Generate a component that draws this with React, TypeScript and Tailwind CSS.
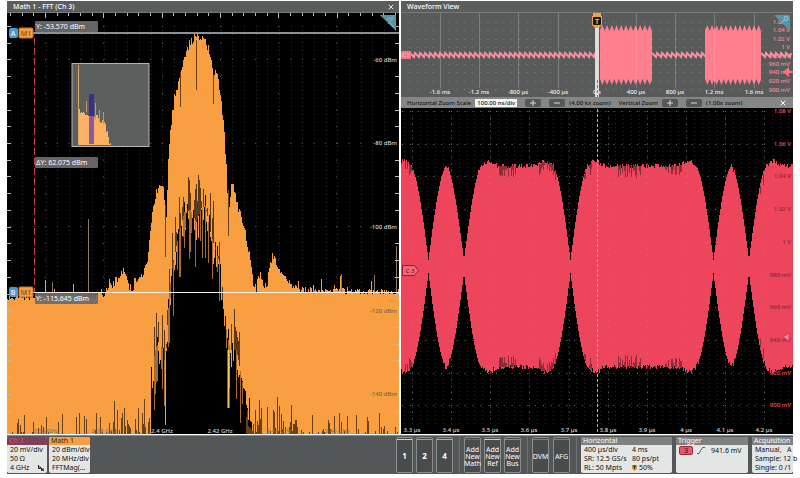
import type { ReactNode } from "react";
import clsx from "clsx";
import { X } from "lucide-react";

type Pt = [number, number];

// 고정 시드 노이즈 (0..1)
function noise(n: number) {
  const s = Math.sin(n * 127.1 + 11.7) * 43758.5453;
  return s - Math.floor(s);
}

function lerp(points: Pt[], x: number) {
  for (let i = 1; i < points.length; i++) {
    const [x0, y0] = points[i - 1];
    const [x1, y1] = points[i];
    if (x <= x1) return y0 + ((y1 - y0) * (x - x0)) / (x1 - x0);
  }
  return points[points.length - 1][1];
}

const range = (n: number) => Array.from({ length: n }, (_, i) => i);

/* ── FFT ─────────────────────────────────────────────── */

const FFT_TOP: Pt[] = [
  [7, 297], [95, 296], [104, 294], [110, 286], [116, 280], [120, 274], [124, 272],
  [127, 282], [132, 292], [134, 280], [137, 283], [141, 278], [145, 268], [148, 254],
  [150, 228], [153, 208], [156, 192], [160, 185], [163, 188], [165, 215], [166, 215],
  [168, 158], [171, 122], [174, 98], [178, 82], [181, 70], [184, 58], [189, 44],
  [194, 37], [198, 35], [202, 38], [206, 45], [210, 53], [213, 78], [215, 68],
  [220, 92], [223, 122], [226, 165], [228, 228], [229, 204], [231, 182], [234, 190],
  [239, 212], [243, 224], [246, 240], [250, 260], [253, 282], [256, 290], [258, 276],
  [261, 277], [263, 287], [267, 286], [269, 266], [272, 256], [275, 262], [278, 266],
  [282, 275], [290, 284], [300, 290], [399, 292],
];

const FFT_FLOOR: Pt[] = [
  [150, 430], [151, 372], [155, 350], [158, 342], [163, 350], [165, 370], [167, 325],
  [169, 290], [173, 262], [178, 236], [184, 212], [190, 210], [196, 222], [201, 208],
  [205, 206], [210, 232], [215, 250], [219, 262], [222, 300], [225, 325], [230, 350],
  [236, 350], [241, 376], [245, 398], [249, 408], [254, 434],
];

function fftTop(x: number) {
  const base = lerp(FFT_TOP, x);
  const flat = x < 110 || x > 280;
  const jitter = (noise(x) - 0.5) * (flat ? 6 : 9);
  const spike = flat && noise(x + 500) > 0.93 ? -noise(x + 900) * 16 : 0;
  return Math.round(base + jitter + spike);
}

function fftPath() {
  let d = "M7 434";
  for (let x = 7; x < 399; x++) d += `V${fftTop(x)}H${x + 1}`;
  return d + "V434Z";
}

function floorPath() {
  let d = "M150 434";
  for (let x = 150; x < 254; x++) {
    d += `V${Math.min(434, Math.round(lerp(FFT_FLOOR, x) + (noise(x + 40) - 0.35) * 34))}H${x + 1}`;
  }
  return d + "V434Z";
}

// 바닥 근처의 가는 스파이크
function bottomSpikes() {
  let d = "";
  for (let x = 9; x < 398; x++) {
    const near = (x > 110 && x < 150) || (x > 245 && x < 300);
    if (noise(x + 71) < (near ? 0.35 : 0.72) || (x > 150 && x < 245)) continue;
    const h = 2 + noise(x + 33) ** 2 * (near ? 36 : 19);
    d += `M${x}.5 434v-${Math.round(h)}`;
  }
  return d;
}

function humpStreaks(down: boolean) {
  let d = "";
  for (let x = 153; x < 244; x++) {
    if (noise(x + (down ? 210 : 310)) < 0.58) continue;
    const y = Math.round(lerp(FFT_FLOOR, x));
    const h = Math.round(noise(x + (down ? 400 : 600)) * 42);
    d += `M${x}.5 ${y}v${down ? h + 14 : -h}`;
  }
  return d;
}

function insetPath() {
  let d = "M78 145";
  for (let x = 78; x < 111; x++) {
    const base = lerp([[78, 107], [84, 109], [97, 114], [104, 118], [111, 145]], x);
    d += `V${Math.min(145, Math.round(base + noise(x + 3) * 7))}H${x + 1}`;
  }
  return d + "V145Z";
}

function CornerIcon({ x, y, wave }: { x: number; y: number; wave?: boolean }) {
  return (
    <g transform={`translate(${x} ${y})`}>
      <path d="M0 0H16V16Z" fill="#5b93a5" />
      {wave ? (
        <g fill="none" stroke="#8fd0e2">
          <circle cx="12" cy="3.500" r="2" />
          <path d="M10.500 5L6 9" />
        </g>
      ) : (
        <path d="M6 5l7-3M13 3l-5 6M10 8l4 4" stroke="#86b7c6" fill="none" />
      )}
    </g>
  );
}

function FftPlot() {
  return (
    <svg viewBox="7 13 392 421" className="block h-auto w-full bg-black font-['Noto_Sans',sans-serif] text-[6px] font-medium">
      <g stroke="#2b2d2d" strokeDasharray="1 3">
        {range(33).map((i) => (
          <path key={i} d={`M${Math.round(10.5 + i * 11.67)}.5 26V434`} />
        ))}
      </g>
      <g stroke="#555858" strokeDasharray="1 10.67">
        {[59, 143, 226, 310, 394].map((y) => (
          <path key={y} d={`M10 ${y}.5H366`} />
        ))}
      </g>
      <g stroke="#606464" strokeDasharray="1 15.7">
        {[45, 103, 162, 220, 278, 336].map((x) => (
          <path key={x} d={`M${x}.5 26V434`} />
        ))}
      </g>

      <path d={fftPath()} fill="#f89f42" />
      <path d="M88.500 292V219M52.500 296V282M396.500 292V246M374.500 292V275M341.500 292V274" stroke="#96795a" />
      <path d={floorPath()} fill="#000" />
      <path d={humpStreaks(false)} stroke="#5d3a17" />
      <path d={humpStreaks(true)} stroke="#a86c30" />
      <path d={bottomSpikes()} stroke="#6b4119" />
      <path d="M165.500 360V425" stroke="#d8b04c" />
      <path d="M228.500 350V408" stroke="#f2cf4e" strokeWidth="2" />
      <path d="M165.500 205V257M180.500 72V107M196.500 40V90M213.500 75V104M228.500 190V236" stroke="#6b4119" />

      <g stroke="#b9bcbc">
        {range(34).map((i) => {
          const x = Math.round(10 + i * 11.67);
          return <path key={i} d={`M${x}.5 13v${(i + 2) % 5 === 0 ? 5 : 3}`} />;
        })}
        {range(24).map((i) => {
          const y = Math.round(26 + i * 16.72);
          const labelled = i % 5 === 2;
          return <path key={i} d={labelled ? `M7 ${y}.5h4` : `M7 ${y}.5h4M395 ${y}.5h4`} />;
        })}
      </g>

      {/* 축 라벨 */}
      <g textAnchor="end" fill="#d5d8d8">
        <text x="397" y="62">-60 dBm</text>
        <text x="397" y="145">-80 dBm</text>
        <text x="397" y="229">-100 dBm</text>
        <g fill="#80643f">
          <text x="397" y="313">-120 dBm</text>
          <text x="397" y="396">-140 dBm</text>
        </g>
      </g>
      <g textAnchor="middle" fill="#d5d8d8">
        <text x="162" y="433">2.4 GHz</text>
        <text x="220" y="433">2.42 GHz</text>
        <g fill="#8f7250">
          <text x="46" y="433">2.36 GHz</text>
          <text x="104" y="433">2.38 GHz</text>
          <text x="279" y="433">2.44 GHz</text>
          <text x="337" y="433">2.46 GHz</text>
        </g>
      </g>

      {/* 커서 */}
      <path d="M33 33H399" stroke="#8d9292" strokeWidth="2" />
      <path d="M33 292.500H399" stroke="#f4eee6" />
      <path d="M34.500 38V292" stroke="#c04a4a" strokeDasharray="7 3" />
      {[
        { y: 21, label: "Y: -53.570 dBm" },
        { y: 157, label: "ΔY: 62.075 dBm" },
        { y: 293, label: "Y: -115.645 dBm" },
      ].map((c) => (
        <g key={c.y} fontSize="7" fontWeight="400">
          <rect x="35" y={c.y} width="63" height="11" rx="1" fill="#6a6c6c" fillOpacity="0.93" />
          <text x="36" y={c.y + 8} fill="#fff">{c.label}</text>
        </g>
      ))}
      {[{ y: 28, label: "A" }, { y: 287, label: "B" }].map((c) => (
        <g key={c.label} textAnchor="middle" fontSize="7">
          <rect x="9" y={c.y} width="9" height="10" rx="2" fill="#4b9ad6" />
          <text x="13" y={c.y + 8} fill="#e8f6ff">{c.label}</text>
          <rect x="19" y={c.y} width="14" height="10" rx="1" fill="#f89f42" stroke="#b87430" />
          <text x="26" y={c.y + 8} fill="#7c4c16">M1</text>
        </g>
      ))}

      {/* 미니맵 */}
      <rect x="72" y="63.500" width="77" height="83" fill="#5d5f5f" stroke="#b5b7b7" />
      <path d={insetPath()} fill="#fbb264" />
      <path d="M78.500 65V145" stroke="#dfa566" />
      <path d="M86.500 101V112M95.500 103V120M99.500 110V122M103.500 112V124" stroke="#c59867" />
      <rect x="89" y="94" width="5" height="22" fill="#3a2f91" />
      <rect x="89" y="116" width="5" height="28" fill="#8c58a0" />

      <CornerIcon x={380} y={15} />
    </svg>
  );
}

/* ── Waveform ────────────────────────────────────────── */

function sawPath(from: number, to: number) {
  let d = `M${from} 53`;
  for (let x = from; x + 5 <= to; x += 5) d += `L${x + 4} 57L${x + 5} 53`;
  return d;
}

function burstPath(from: number, to: number) {
  let d = `M${from} 30`;
  const n = Math.round((to - from) / 4.7);
  const w = (to - from) / n;
  for (let i = 0; i < n; i++) d += `L${from + (i + 0.5) * w} 25L${from + (i + 1) * w} 31`;
  d += `V80`;
  for (let i = n; i > 0; i--) d += `L${from + (i - 0.5) * w} 85L${from + (i - 1) * w} 79`;
  return d + "Z";
}

function Overview() {
  const times = ["-1.6 ms", "-1.2 ms", "-800 µs", "-400 µs", "0 s", "400 µs", "800 µs", "1.2 ms", "1.6 ms"];
  const volts: [string, number][] = [
    ["1.06 V", 24], ["1.04 V", 32], ["1.02 V", 41], ["1 V", 49], ["980 mV", 58],
    ["960 mV", 66], ["940 mV", 74], ["920 mV", 83], ["900 mV", 92],
  ];
  return (
    <svg viewBox="401 13 392 84" className="block h-auto w-full bg-[#595b5b] font-['Noto_Sans',sans-serif] text-[6px] font-medium">
      <g stroke="#828585" strokeDasharray="1 6.85">
        {[22, 30, 39, 47, 64, 72, 81, 89].map((y) => (
          <path key={y} d={`M409 ${y}.5H765`} />
        ))}
      </g>
      <g stroke="#7b7e7e">
        {range(9).map((i) => (
          <path key={i} d={`M${Math.round(440 + i * 39.2)}.5 13V88`} />
        ))}
      </g>
      <g fill="none" stroke="#f78f9c" strokeWidth="2">
        <path d={sawPath(410, 597)} />
        <path d={sawPath(652, 707)} />
        <path d={sawPath(761, 793)} />
      </g>
      <g fill="#ff8795">
        {volts.map(([t, y]) => (
          <text key={t} x="790" y={y} textAnchor="end">{t}</text>
        ))}
      </g>
      <path d={burstPath(600, 652)} fill="#ff7f8f" />
      <path d={burstPath(705, 761)} fill="#ff7f8f" />
      <path d="M636.500 28V82M714.500 28V82M754.500 28V82" stroke="#ff8d9b" />
      <g fill="#eceeee" textAnchor="middle">
        {times.map((t, i) => (
          <text key={t} x={Math.round(440 + i * 39.2)} y="94">{t}</text>
        ))}
      </g>

      <rect x="401" y="51" width="10" height="8" fill="#f47786" />
      <text x="406" y="57" textAnchor="middle" fill="#ffb4bc">C3</text>

      <path d="M597 28V97" stroke="#dcdede" strokeWidth="4" />
      <path d="M597.500 80V97" stroke="#77797a" strokeDasharray="3 2" />
      <path d="M593 13h8v3h-8z" fill="#f89f42" />
      <path d="M592 16h10v9l-3 3h-4l-3-3z" fill="#f89f42" />
      <rect x="593" y="17" width="8" height="8" rx="1" fill="#1d1408" />
      <text x="597" y="24" textAnchor="middle" fill="#ffb454" fontSize="7" fontWeight="700">T</text>

      <CornerIcon x={774} y={15} wave />
      <path d="M783 72l6-5v4h4v2h-4v4z" fill="#ff6f81" />
    </svg>
  );
}

const NODES = [428.5, 464, 570.5, 713.5, 749];

function amplitude(x: number) {
  const d = Math.min(...NODES.map((n) => Math.abs(x - n)));
  const rise = d < 19 ? Math.sin((Math.PI / 2) * (d / 19)) : 1;
  const overshoot = 5 * Math.exp(-(((d - 25) / 6) ** 2));
  return { d, h: 94 * rise + overshoot };
}

function envelopePath() {
  let d = "M401 267";
  for (let x = 401; x < 793; x++) {
    const a = amplitude(x + 0.5);
    const j = a.d > 14 ? (noise(x) - 0.5) * 5 : 0;
    d += `V${Math.round(260 - a.h + j)}H${x + 1}`;
  }
  for (let x = 792; x >= 401; x--) {
    const a = amplitude(x + 0.5);
    const j = a.d > 14 ? (noise(x + 77) - 0.5) * 5 : 0;
    d += `V${Math.round(273 + a.h + j)}H${x}`;
  }
  return d + "Z";
}

// 포락선 가장자리의 어두운 결
function fringe() {
  let d = "";
  const bands = [[405, 412], [497, 516], [538, 556], [584, 592], [618, 642], [664, 682], [760, 764]];
  bands.forEach(([a, b]) => {
    for (let x = a; x < b; x++) {
      if (noise(x + 5) < 0.4) continue;
      const { h } = amplitude(x);
      const len = Math.round(3 + noise(x + 9) * 9);
      d += `M${x}.5 ${Math.round(260 - h)}v${len}M${x}.5 ${Math.round(273 + h)}v-${len}`;
    }
  });
  return d;
}

function ZoomPlot() {
  const times = ["3.3 µs", "3.4 µs", "3.5 µs", "3.6 µs", "3.7 µs", "3.8 µs", "3.9 µs", "4 µs", "4.1 µs", "4.2 µs"];
  const volts = ["1.08 V", "1.06 V", "1.04 V", "1.02 V", "1 V", "980 mV", "960 mV", "940 mV", "920 mV", "900 mV"];
  const grid = (
    <>
      {range(10).map((i) => (
        <path key={i} d={`M402 ${Math.round(111 + i * 32.7)}.5H768`} strokeDasharray="1 6.83" />
      ))}
      {range(10).map((i) => (
        <path key={i + 20} d={`M${Math.round(412 + i * 39.15)}.5 111V424`} strokeDasharray="1 5.54" />
      ))}
    </>
  );
  return (
    <svg viewBox="401 108 392 326" className="block h-auto w-full bg-black font-['Noto_Sans',sans-serif] text-[6px] font-medium">
      <g stroke="#242626" strokeDasharray="1 3">
        {range(50).map((i) => (
          <path key={i} d={`M${Math.round(404 + i * 7.83)}.5 111V424`} />
        ))}
      </g>
      <g stroke="#5e6161">{grid}</g>
      <path d={envelopePath()} fill="#ed455b" />
      <path d={fringe()} stroke="#8f2c3a" />
      <g stroke="#fff" strokeOpacity="0.12">{grid}</g>
      <path d="M597.500 109V434" stroke="#f2a055" strokeDasharray="3 2" />

      {volts.map((v, i) => (
        <text
          key={v}
          x="791"
          y={Math.round(113 + i * 32.7)}
          textAnchor="end"
          fill={i > 1 && i < 8 ? "#8f2436" : "#f0566a"}
        >
          {v}
        </text>
      ))}
      <g fill="#dcdede" textAnchor="middle">
        {times.map((t, i) => (
          <text key={t} x={Math.round(412 + i * 39.15)} y="432">{t}</text>
        ))}
      </g>

      <path d="M402.500 265.500h12l4 5-4 5h-12z" fill="#f0687a" stroke="#8f1c30" />
      <text x="410" y="273" textAnchor="middle" fill="#6d1322">C 3</text>
      <path d="M783 337l6-4v8z" fill="#f58a98" stroke="#c8405a" />
    </svg>
  );
}

/* ── 공통 UI ─────────────────────────────────────────── */

function PanelHeader({ title, closable }: { title: string; closable?: boolean }) {
  return (
    <header className="flex h-3 items-center justify-between border-b border-[#777a7a] bg-[#5b5d5d] pr-1 pl-1.5 text-white">
      <h2 className="text-[7px] leading-none font-medium">{title}</h2>
      {closable && (
        <button type="button" aria-label="Close" className="text-[#e4e6e6]">
          <X className="size-2" strokeWidth={3} />
        </button>
      )}
    </header>
  );
}

function ZoomButton({ label, plus }: { label: string; plus?: boolean }) {
  return (
    <button
      type="button"
      aria-label={label}
      className="flex h-2 w-4 shrink-0 items-center justify-center rounded-xs bg-[#555858] text-[#d8dada]"
    >
      <svg viewBox="0 0 6 6" className="size-1.5">
        <path d={plus ? "M0 3h6M3 0v6" : "M0 3h6"} stroke="currentColor" />
      </svg>
    </button>
  );
}

function ZoomBar() {
  return (
    <div className="flex h-[11px] items-center bg-[#858787] px-1.5 text-[6px] leading-none font-medium whitespace-nowrap text-[#151616]">
      <label htmlFor="hscale">Horizontal Zoom Scale</label>
      <input
        id="hscale"
        defaultValue="100.00 ns/div"
        className="mr-2 ml-1 h-2 w-[42px] shrink-0 bg-[#f2f3f3] text-center"
      />
      <div className="flex gap-2">
        <ZoomButton label="Horizontal zoom in" plus />
        <ZoomButton label="Horizontal zoom out" />
      </div>
      <span className="ml-1">(4.00 kx zoom)</span>
      <span className="mr-1 ml-2">Vertical Zoom</span>
      <div className="flex gap-2">
        <ZoomButton label="Vertical zoom in" plus />
        <ZoomButton label="Vertical zoom out" />
      </div>
      <span className="ml-1">(1.00x zoom)</span>
      <button type="button" aria-label="Close zoom" className="ml-auto text-white">
        <X className="size-2" strokeWidth={3} />
      </button>
    </div>
  );
}

function Badge({ title, head, className, children }: {
  title: string; head: string; className?: string; children: ReactNode;
}) {
  return (
    <section className={clsx("shrink-0 rounded-xs bg-[#e4e6e5] text-[#111] whitespace-nowrap", className)}>
      <h3 className={clsx("h-2 rounded-t-xs px-0.5 text-[7px] leading-2", head)}>{title}</h3>
      <div className="px-[3px] text-[7px] leading-[9px]">{children}</div>
    </section>
  );
}

function BarButton({ bar, big, children }: { bar: string; big?: boolean; children: ReactNode }) {
  return (
    <button
      type="button"
      className="flex w-[17px] shrink-0 flex-col items-center rounded-xs border border-[#8a8d8d] bg-[#494c4c] text-white"
    >
      <span className={clsx("mt-px h-px w-full", bar)} />
      <span className={clsx("flex flex-1 items-center text-center", big ? "text-[8px] font-bold" : "text-[7px] leading-[7px]")}>
        {children}
      </span>
    </button>
  );
}

export default function App() {
  return (
    <div className="bg-white px-[7px] pt-px font-['Noto_Sans',sans-serif]">
      <main className="grid grid-cols-2 gap-0.5">
        <section>
          <PanelHeader title="Math 1 - FFT (Ch 3)" closable />
          <FftPlot />
        </section>
        <section>
          <PanelHeader title="Waveform View" />
          <Overview />
          <ZoomBar />
          <ZoomPlot />
        </section>
      </main>

      {/* 하단 설정 바 */}
      <footer className="mt-px flex h-[39px] justify-between border-t border-[#8a8d8d] bg-[#545757] py-px">
        <div className="flex gap-0.5">
          <Badge title="Ch 3" head="bg-[#7c4059] text-[#d9556f]" className="w-10">
            <p>20 mV/div</p>
            <p>50 Ω</p>
            <div className="flex items-center justify-between">
              4 GHz
              <svg viewBox="0 0 6 6" className="size-1.5" fill="none" stroke="#222">
                <path d="M.5 0v3.500h2V2h-2M3.500 3v2.500h1V3.500M4.500 5.500H6V3" />
              </svg>
            </div>
          </Badge>
          <Badge title="Math 1" head="bg-[#f89f42] text-[#3a2204]" className="w-[41px]">
            <p>20 dBm/div</p>
            <p>20 MHz/div</p>
            <p>FFTMag(...</p>
          </Badge>
        </div>

        <div className="flex gap-1">
          <div className="flex gap-[3px] border-r border-[#6f7272] pr-1.5">
            <BarButton bar="bg-[#e6d36a]" big>1</BarButton>
            <BarButton bar="bg-[#62b6c8]" big>2</BarButton>
            <BarButton bar="bg-[#a6c468]" big>4</BarButton>
          </div>
          <div className="flex gap-[3px] border-r border-[#6f7272] pr-1.5">
            <BarButton bar="bg-[#6d5a9a]">Add New Math</BarButton>
            <BarButton bar="bg-[#c9cce0]">Add New Ref</BarButton>
            <BarButton bar="bg-[#a873b0]">Add New Bus</BarButton>
          </div>
          <div className="flex gap-1 border-r border-[#6f7272] pr-1.5">
            <BarButton bar="bg-[#7c7f7f]">DVM</BarButton>
            <BarButton bar="bg-[#7c7f7f]">AFG</BarButton>
          </div>
          <Badge title="Horizontal" head="bg-[#7e8181] text-white" className="w-[91px]">
            <div className="grid grid-cols-[48px_1fr]">
              <span>400 µs/div</span><span>4 ms</span>
              <span>SR: 12.5 GS/s</span><span>80 ps/pt</span>
              <span>RL: 50 Mpts</span>
              <span className="flex items-center gap-0.5">
                <svg viewBox="0 0 5 6" className="h-1.5 w-[5px]">
                  <path d="M0 0h5v4L2.500 6 0 4z" fill="#e2953c" />
                  <path d="M1 1h3M2.500 1v3" stroke="#222" />
                </svg>
                50%
              </span>
            </div>
          </Badge>
          <Badge title="Trigger" head="bg-[#7e8181] text-white" className="w-[72px]">
            <div className="flex items-center gap-1 pt-px">
              <span className="w-3.5 rounded-xs border border-[#a02c40] bg-[#ee5368] text-center leading-[7px]">3</span>
              <svg viewBox="0 0 8 7" className="h-[7px] w-2">
                <path d="M0 6.500h2L5.500.5H8" fill="none" stroke="#444" strokeWidth="0.8" />
              </svg>
              <span className="ml-0.5">941.6 mV</span>
            </div>
          </Badge>
          <Badge title="Acquisition" head="bg-[#7e8181] text-white" className="w-[41px]">
            <p>Manual,&nbsp;&nbsp;&nbsp;A</p>
            <p>Sample: 12 b</p>
            <p>Single: 0 /1</p>
          </Badge>
        </div>
      </footer>
    </div>
  );
}
